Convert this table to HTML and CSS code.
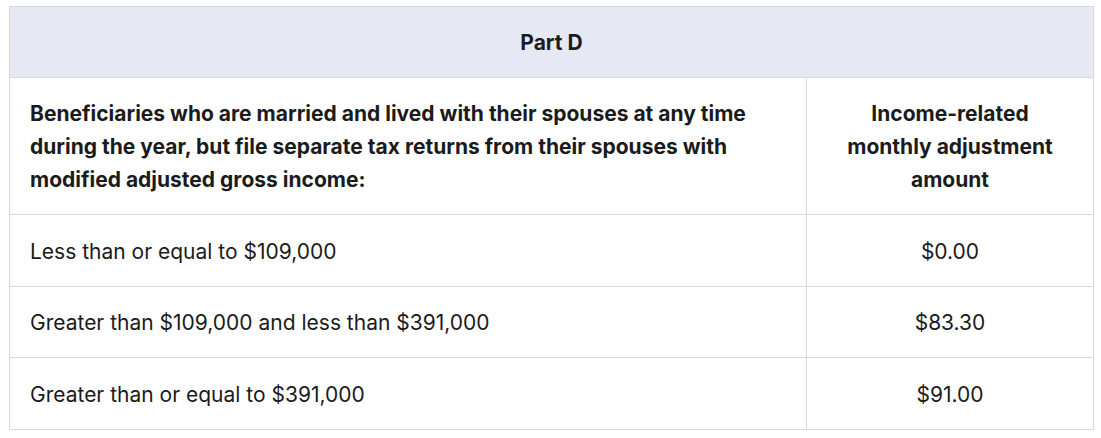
FILE: index.html
```html
<!DOCTYPE html>
<html lang="en">
<head>
<meta charset="utf-8">
<title>Part D</title>
<link rel="stylesheet" href="styles.css">
</head>
<body>
<div class="wrap">
<table class="irmaa">
  <thead>
    <tr><th colspan="2" class="title">Part D</th></tr>
  </thead>
  <tbody>
    <tr class="subhead">
      <th class="left">Beneficiaries who are married and lived with their spouses at any time during the year, but file separate tax returns from their spouses with modified adjusted gross income:</th>
      <th class="right">Income-related monthly adjustment amount</th>
    </tr>
    <tr><td class="left">Less than or equal to $109,000</td><td class="right">$0.00</td></tr>
    <tr><td class="left">Greater than $109,000 and less than $391,000</td><td class="right">$83.30</td></tr>
    <tr><td class="left">Greater than or equal to $391,000</td><td class="right">$91.00</td></tr>
  </tbody>
</table>
</div>
</body>
</html>
```
FILE: styles.css
```css
html, body { margin: 0; padding: 0; background: #ffffff; }
.wrap { padding: 6px 7px 0 9px; }
.irmaa {
  width: 1085px;
  border-collapse: collapse;
  font-family: "Inter", "Liberation Sans", sans-serif;
  font-size: 21px;
  line-height: 32.67px;
  color: #1b1b1b;
}
.irmaa th, .irmaa td {
  border: 1px solid #d9d9d9;
  padding: 20.5px 20px 17.5px;
  vertical-align: middle;
}
.irmaa th { font-weight: 700; }
.irmaa .title {
  background: #e6e9f4;
  text-align: center;
  padding: 19.67px 20px 17.67px;
}
.irmaa .left { text-align: left; width: 756px; }
.irmaa .right { text-align: center; }
.irmaa td { font-weight: 400; }
```
